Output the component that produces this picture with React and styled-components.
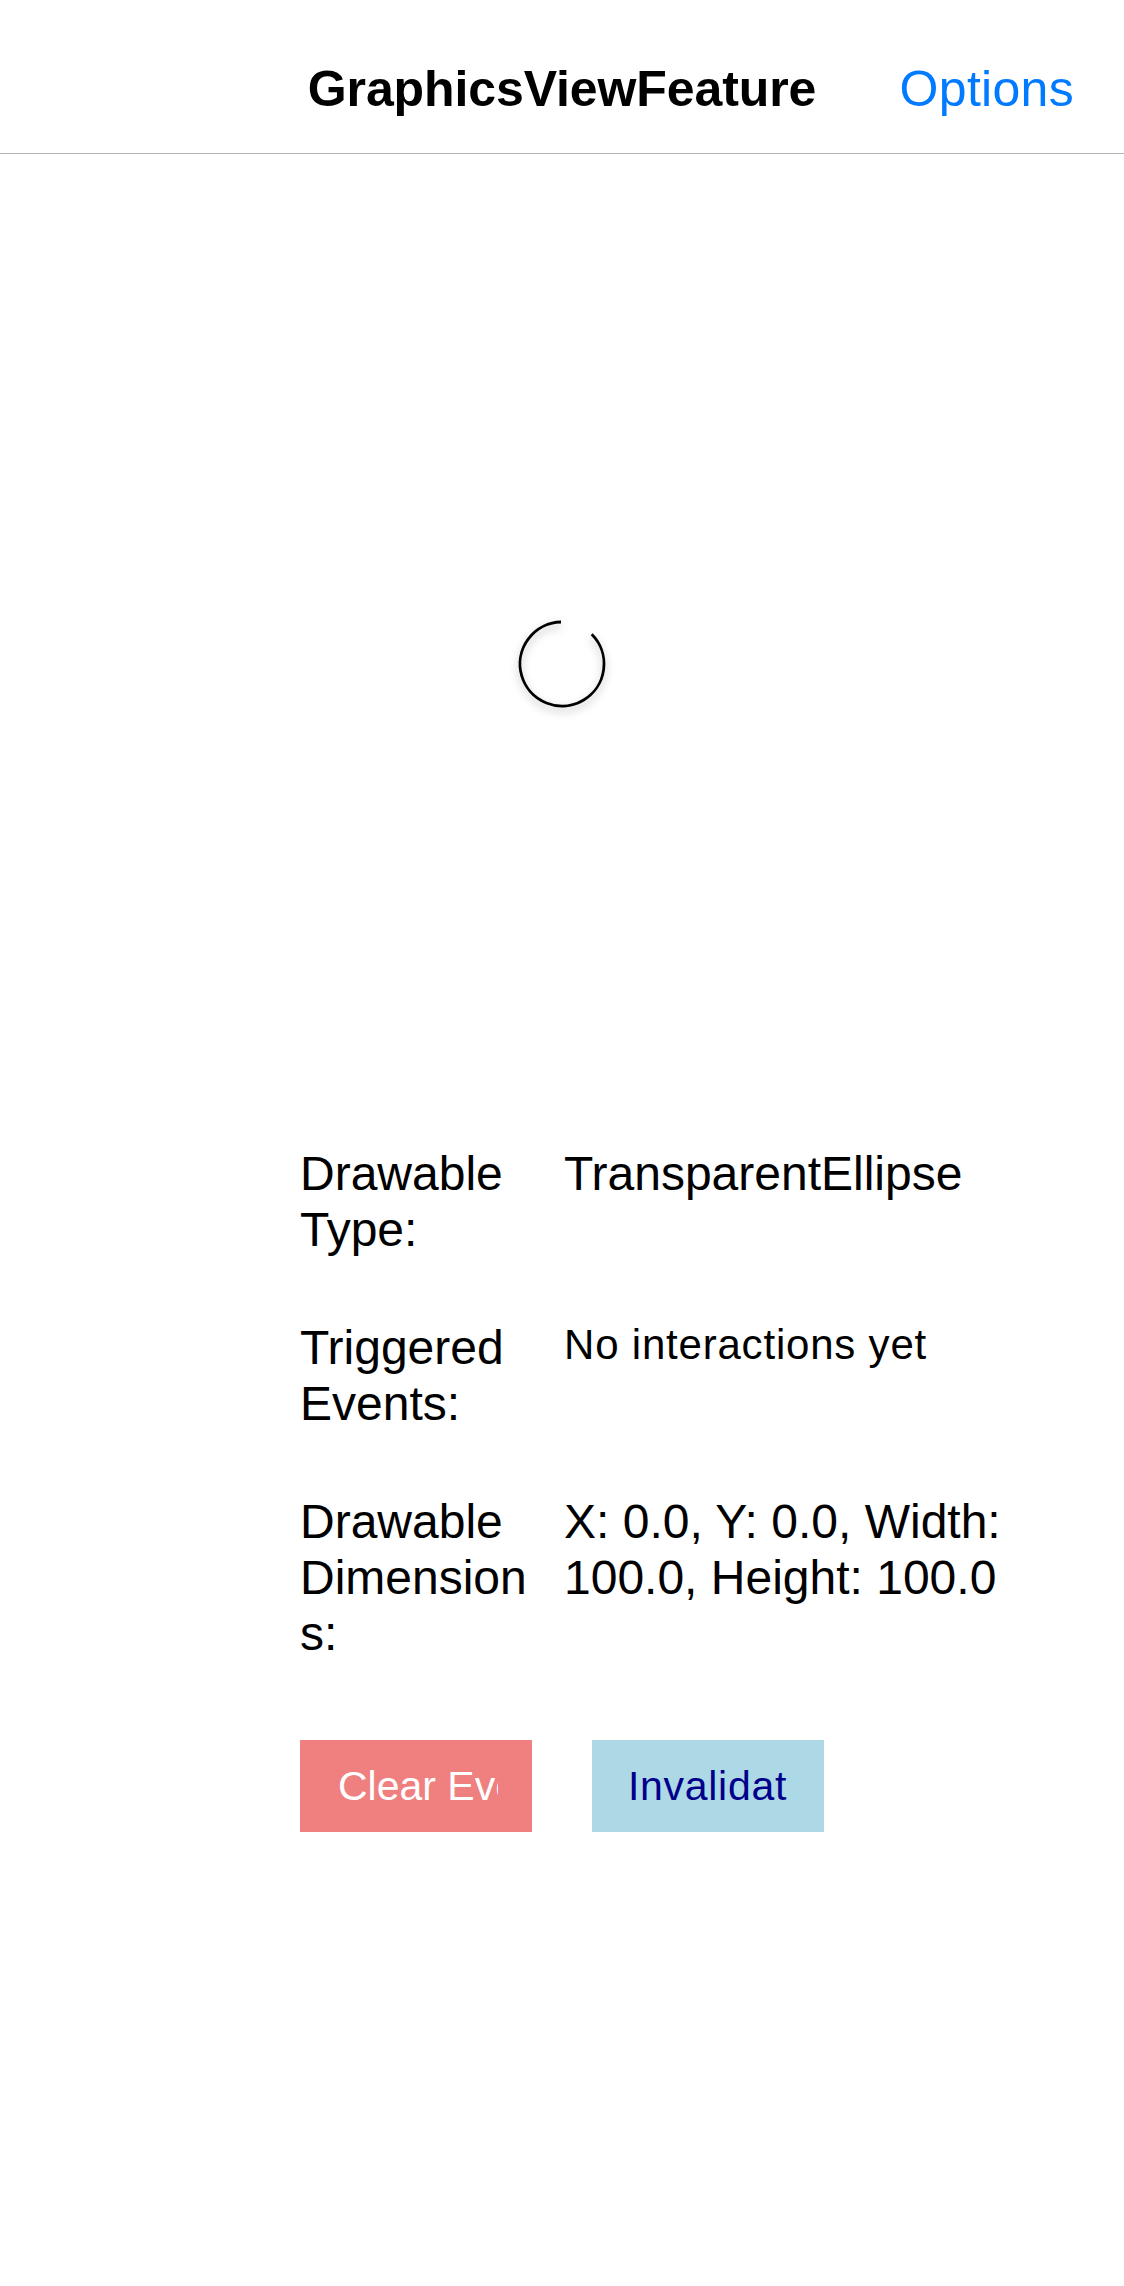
import React from "react";
import styled, { createGlobalStyle } from "styled-components";

const GlobalStyle = createGlobalStyle`
  html, body {
    margin: 0;
    padding: 0;
    background: #fff;
    font-family: "Liberation Sans", Arial, sans-serif;
    color: #000;
  }
  * {
    box-sizing: border-box;
  }
`;

const Page = styled.div`
  width: 1124px;
  min-height: 2286px;
  background: #fff;
`;

const NavBar = styled.header`
  display: grid;
  grid-template-columns: 1fr auto 1fr;
  align-items: start;
  height: 154px;
  padding: 61px 50px 0;
  border-bottom: 1px solid #b4b4b4;
  line-height: 56px;
  font-size: 50px;
`;

const NavTitle = styled.h1`
  grid-column: 2;
  margin: 0;
  font-size: 50px;
  font-weight: 700;
  letter-spacing: -0.1px;
  line-height: 56px;
`;

const NavAction = styled.span`
  grid-column: 3;
  justify-self: end;
  color: #007aff;
  letter-spacing: 0.3px;
`;

const Canvas = styled.section`
  display: flex;
  justify-content: center;
  align-items: flex-start;
  height: 992px;
  padding-top: 460px;
`;

const Ellipse = styled.svg`
  width: 100px;
  height: 100px;
  overflow: visible;
  filter: drop-shadow(0 4px 4px rgba(0, 0, 0, 0.28));
`;

const InfoGrid = styled.dl`
  display: grid;
  grid-template-columns: 240px 460px;
  column-gap: 24px;
  row-gap: 62px;
  margin: 0;
  padding-left: 300px;
`;

const Label = styled.dt`
  margin: 0;
  font-size: 48px;
  line-height: 56px;
  overflow-wrap: anywhere;
`;

const Value = styled.dd`
  margin: 0;
  font-size: ${(p) => (p.$small ? "42px" : "48px")};
  line-height: ${(p) => (p.$small ? "50px" : "56px")};
  letter-spacing: ${(p) => (p.$small ? "0.8px" : "0")};
`;

const ButtonRow = styled.div`
  display: flex;
  gap: 60px;
  margin-top: 78px;
  padding-left: 300px;
`;

const Button = styled.button`
  display: flex;
  align-items: center;
  width: 232px;
  height: 92px;
  padding: 0 ${(p) => p.$right}px 0 ${(p) => p.$left}px;
  border: none;
  border-radius: 0;
  background: ${(p) => p.$bg};
  color: ${(p) => p.$fg};
  font-family: "Liberation Sans", Arial, sans-serif;
  font-size: 41px;
  letter-spacing: ${(p) => p.$spacing}px;
  cursor: pointer;
`;

const ButtonText = styled.span`
  display: block;
  width: 100%;
  overflow: hidden;
  white-space: nowrap;
  text-align: left;
`;

const rows = [
  { label: "Drawable Type:", value: "TransparentEllipse" },
  { label: "Triggered Events:", value: "No interactions yet", small: true },
  {
    label: "Drawable Dimensions:",
    value: "X: 0.0, Y: 0.0, Width: 100.0, Height: 100.0",
  },
];

export default function App() {
  return (
    <>
      <GlobalStyle />
      <Page>
        <NavBar>
          <NavTitle>GraphicsViewFeature</NavTitle>
          <NavAction>Options</NavAction>
        </NavBar>

        <Canvas>
          <Ellipse viewBox="0 0 100 100">
            <path
              d="M 79.7 20.3 A 42 42 0 1 1 49 8"
              fill="none"
              stroke="#000"
              strokeWidth="2.8"
            />
          </Ellipse>
        </Canvas>

        <InfoGrid>
          {rows.map((row) => (
            <React.Fragment key={row.label}>
              <Label>{row.label}</Label>
              <Value $small={row.small}>{row.value}</Value>
            </React.Fragment>
          ))}
        </InfoGrid>

        <ButtonRow>
          <Button $bg="#f08080" $fg="#fff" $left={38} $right={34} $spacing={0}>
            <ButtonText>Clear Events</ButtonText>
          </Button>
          <Button $bg="#add8e6" $fg="#00008b" $left={36} $right={36} $spacing={0.7}>
            <ButtonText>Invalidate</ButtonText>
          </Button>
        </ButtonRow>
      </Page>
    </>
  );
}
